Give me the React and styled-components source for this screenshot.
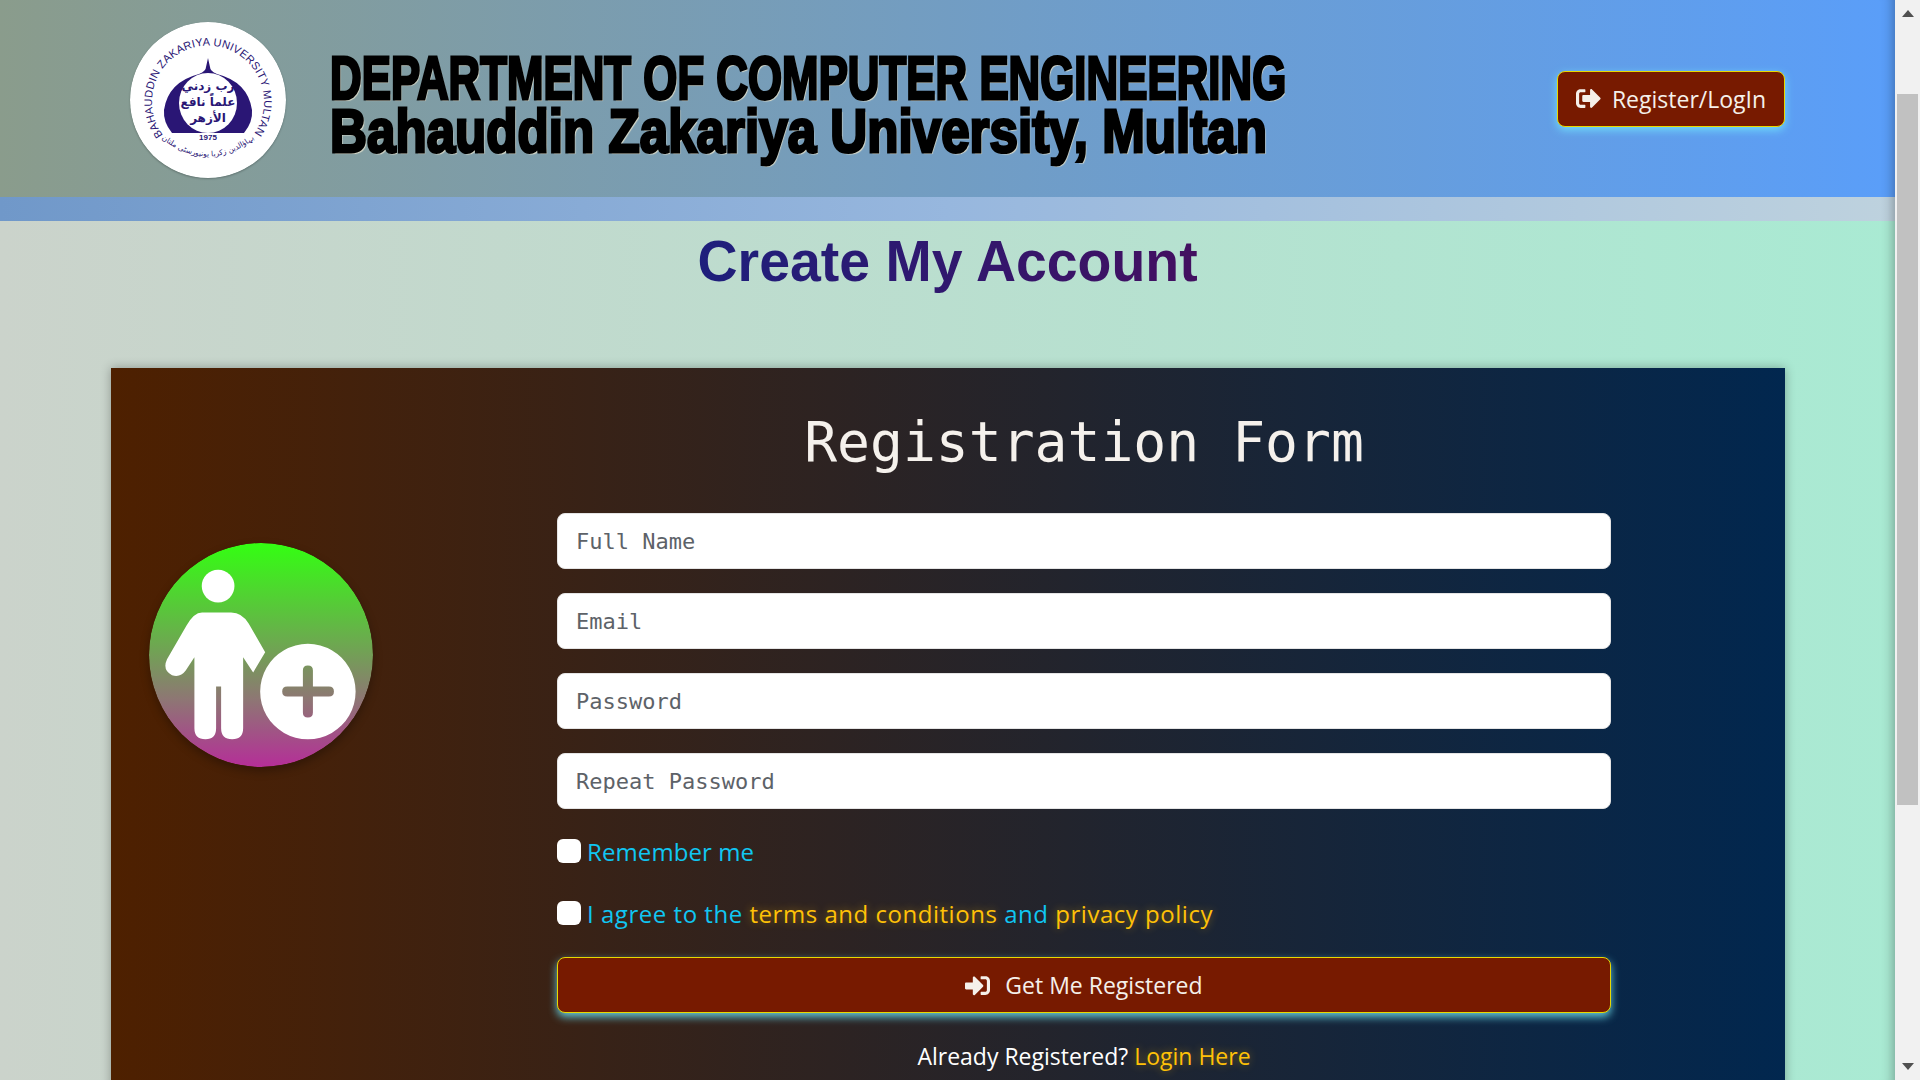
import React from "react";
import styled, { createGlobalStyle } from "styled-components";
import { FaSignOutAlt, FaSignInAlt } from "react-icons/fa";

const GlobalStyle = createGlobalStyle`
  html, body {
    margin: 0;
    padding: 0;
    height: 100%;
    overflow: hidden;
  }
  * {
    box-sizing: border-box;
  }
`;

const Viewport = styled.div`
  display: flex;
  height: 100vh;
  overflow: hidden;
  font-family: "Open Sans", "Noto Sans", sans-serif;
`;

const Page = styled.main`
  position: relative;
  flex: 1;
  min-width: 0;
  overflow: hidden;
  background: linear-gradient(90deg, #cbd3cb 0%, #a9ead3 100%);

  &::after {
    content: "";
    position: absolute;
    inset: 0;
    pointer-events: none;
    box-shadow: inset -14px 0 12px -12px rgba(0, 0, 0, 0.3);
  }
`;

const Header = styled.header`
  display: flex;
  align-items: center;
  height: 197px;
  padding: 0 110px 0 130px;
  background: linear-gradient(90deg, #8a9c8c 0%, #5a9ef9 100%);
`;

const LogoBadge = styled.svg`
  flex: none;
  width: 156px;
  height: 156px;
  margin-top: 2px;
  border-radius: 50%;
  box-shadow: 0 1px 2px rgba(0, 0, 0, 0.25);
`;

const TitleBlock = styled.h1`
  flex: 1;
  min-width: 0;
  margin: 10px 0 0 44px;
  color: #000;
  font-family: "Liberation Sans", sans-serif;
  font-size: 62px;
  font-weight: 700;
  line-height: 53px;
  white-space: nowrap;
  -webkit-text-stroke: 3px #000;
  text-shadow: 2px 2px 1px #d6d8c8;
`;

const TitleLine = styled.div`
  width: max-content;
  transform: scaleX(${(props) => props.$squeeze});
  transform-origin: left center;
`;

const HeaderButton = styled.a`
  display: flex;
  flex: none;
  align-items: center;
  justify-content: center;
  gap: 11px;
  width: 228px;
  height: 56px;
  border: 1px solid #e8d800;
  border-radius: 8px;
  background: #771a00;
  color: #f5f0ea;
  font-size: 23px;
  box-shadow: 0 3px 9px #6fdcfb;
`;

const Band = styled.div`
  height: 24px;
  background: linear-gradient(90deg, #7098c9 0%, #97b7de 50%, #bed2de 100%);
`;

const PageTitle = styled.h2`
  margin: 0;
  padding-top: 7px;
  height: 147px;
  text-align: center;
  font-family: "Liberation Sans", sans-serif;
  font-size: 58px;
  font-weight: 700;
  line-height: 66px;
`;

const PageTitleText = styled.span`
  display: inline-block;
  transform: scaleX(0.956);
  background: linear-gradient(90deg, #1e1f7c, #431060);
  -webkit-background-clip: text;
  background-clip: text;
  color: transparent;
`;

const Card = styled.section`
  display: grid;
  grid-template-columns: 446px 1054px;
  margin: 0 110px 0 111px;
  padding-bottom: 60px;
  background: linear-gradient(90deg, #4e2000 0%, #01274f 100%);
  box-shadow: 0 0 10px rgba(0, 0, 0, 0.3);
`;

const AvatarColumn = styled.div`
  padding: 175px 0 0 38px;
`;

const Avatar = styled.svg`
  display: block;
  width: 224px;
  height: 224px;
  border-radius: 50%;
  box-shadow: 0 4px 10px rgba(0, 0, 0, 0.3);
`;

const Form = styled.form`
  display: flex;
  flex-direction: column;
`;

const FormTitle = styled.h3`
  margin: 0;
  padding-top: 42px;
  height: 145px;
  color: #f5f1ec;
  text-align: center;
  font-family: "DejaVu Sans Mono", "Liberation Mono", monospace;
  font-size: 54.7px;
  font-weight: 400;
  line-height: 64px;
`;

const TextInput = styled.input`
  display: block;
  width: 100%;
  height: 56px;
  margin-bottom: 24px;
  padding: 0 18px;
  border: 1px solid #e4e4e4;
  border-radius: 8px;
  background: #fff;
  font-family: "DejaVu Sans Mono", "Liberation Mono", monospace;
  font-size: 22px;
  outline: none;

  &::placeholder {
    color: #5d6268;
    opacity: 1;
  }
`;

const CheckRow = styled.label`
  display: flex;
  align-items: center;
  gap: 6px;
  height: 24px;
  margin-top: ${(props) => props.$top};
  color: #10c6f2;
  font-size: 24px;
  letter-spacing: ${(props) => props.$spacing};
  white-space: nowrap;
`;

const CheckBox = styled.input`
  appearance: none;
  flex: none;
  width: 24px;
  height: 24px;
  margin: 0;
  border-radius: 6px;
  background: #fff;
`;

const GlowLink = styled.a`
  color: #ffc107;
  text-shadow: 0 0 8px rgba(255, 193, 7, 0.45);
`;

const SubmitButton = styled.button`
  display: flex;
  align-items: center;
  justify-content: center;
  gap: 15px;
  width: 100%;
  height: 56px;
  margin-top: 32px;
  border: 1px solid #e8d800;
  border-radius: 8px;
  background: #771a00;
  color: #f5f0ea;
  font-family: inherit;
  font-size: 23px;
  box-shadow: 0 4px 8px #62c8d8;
`;

const LoginLine = styled.p`
  margin: 27px 0 0;
  color: #fff;
  text-align: center;
  font-size: 23px;
  line-height: 32px;
`;

const ScrollTrack = styled.aside`
  display: flex;
  flex: none;
  flex-direction: column;
  align-items: center;
  width: 25px;
  background: #f1f1f1;
`;

const ScrollArrow = styled.div`
  flex: none;
  width: 0;
  height: 0;
  margin: ${(props) => (props.$down ? "auto 0 10px" : "10px 0 0")};
  border-left: 6px solid transparent;
  border-right: 6px solid transparent;
  border-top: ${(props) => (props.$down ? "7px solid #505050" : "none")};
  border-bottom: ${(props) => (props.$down ? "none" : "7px solid #505050")};
`;

const ScrollThumb = styled.div`
  flex: none;
  width: 21px;
  height: 711px;
  margin-top: 77px;
  background: #c1c1c1;
`;

function UniversityLogo() {
  return (
    <LogoBadge viewBox="0 0 156 156">
      <defs>
        <path id="logo-top-arc" d="M33 113 A56 56 0 1 1 123 113" />
        <path id="logo-bottom-arc" d="M32 117 Q78 152 124 117" />
      </defs>
      <circle cx="78" cy="78" r="78" fill="#fff" />
      <text fill="#2a1675" fontFamily="Liberation Sans" fontSize="11">
        <textPath href="#logo-top-arc" textLength="245" lengthAdjust="spacing">
          BAHAUDDIN ZAKARIYA UNIVERSITY MULTAN
        </textPath>
      </text>
      <path
        d="M78 36 L80 45 Q80 49 87 52 Q118 60 122 88 Q123 100 114 111 H42 Q33 100 34 88 Q38 60 69 52 Q76 49 76 45 Z"
        fill="#2a1675"
      />
      <ellipse cx="78" cy="81" rx="29" ry="30" fill="#fff" />
      <text fill="#2a1675" fontFamily="DejaVu Sans" fontSize="12" fontWeight="700" textAnchor="middle">
        <tspan x="78" y="68">رب زدني</tspan>
        <tspan x="78" y="84">علماً نافع</tspan>
        <tspan x="78" y="100">الأزهر</tspan>
      </text>
      <text x="78" y="118" fill="#2a1675" fontFamily="Liberation Sans" fontSize="8" fontWeight="700" textAnchor="middle">
        1975
      </text>
      <text fill="#2a1675" fontFamily="DejaVu Sans" fontSize="7.5" textAnchor="middle">
        <textPath href="#logo-bottom-arc" startOffset="50%">
          بہاؤالدین زکریا یونیورسٹی ملتان
        </textPath>
      </text>
    </LogoBadge>
  );
}

function AddUserBadge() {
  return (
    <Avatar viewBox="146 130 671 671">
      <defs>
        <linearGradient id="avatar-fill" x1="0" y1="0" x2="0" y2="1">
          <stop offset="0" stopColor="#33ff12" />
          <stop offset="0.45" stopColor="#6da850" />
          <stop offset="0.7" stopColor="#8e7674" />
          <stop offset="1" stopColor="#b52e98" />
        </linearGradient>
      </defs>
      <circle cx="481.5" cy="465.5" r="335.5" fill="url(#avatar-fill)" />
      <circle cx="353" cy="259" r="49" fill="#fff" />
      <path
        fill="#fff"
        d="M305 338 H392 Q425 338 445 372 L494 457 L458 518 L428 472 V685 Q428 718 395 718 Q362 718 362 685 V560 H347 V685 Q347 718 315 718 Q282 718 282 685 V472 L256 512 Q240 534 215 526 Q185 510 200 478 L258 378 Q280 338 305 338 Z"
      />
      <path
        fill="#fff"
        fillRule="evenodd"
        d="M622 432 A143 143 0 1 1 621.9 432 Z M607 512 V560 H560 Q545 560 545 575 Q545 590 560 590 H607 V638 Q607 653 622 653 Q637 653 637 638 V590 H685 Q700 590 700 575 Q700 560 685 560 H637 V512 Q637 497 622 497 Q607 497 607 512 Z"
      />
    </Avatar>
  );
}

export default function App() {
  return (
    <Viewport>
      <GlobalStyle />
      <Page>
        <Header>
          <UniversityLogo />
          <TitleBlock>
            <TitleLine $squeeze={0.707}>DEPARTMENT OF COMPUTER ENGINEERING</TitleLine>
            <TitleLine $squeeze={0.825}>Bahauddin Zakariya University, Multan</TitleLine>
          </TitleBlock>
          <HeaderButton>
            <FaSignOutAlt size={25} />
            Register/LogIn
          </HeaderButton>
        </Header>
        <Band />
        <PageTitle>
          <PageTitleText>Create My Account</PageTitleText>
        </PageTitle>
        <Card>
          <AvatarColumn>
            <AddUserBadge />
          </AvatarColumn>
          <Form>
            <FormTitle>Registration Form</FormTitle>
            <TextInput type="text" placeholder="Full Name" />
            <TextInput type="email" placeholder="Email" />
            <TextInput type="password" placeholder="Password" />
            <TextInput type="password" placeholder="Repeat Password" />
            <CheckRow $top="6px" $spacing="0.1px">
              <CheckBox type="checkbox" />
              Remember me
            </CheckRow>
            <CheckRow $top="38px" $spacing="0.53px">
              <CheckBox type="checkbox" />
              <span>
                I agree to the <GlowLink>terms and conditions</GlowLink> and{" "}
                <GlowLink>privacy policy</GlowLink>
              </span>
            </CheckRow>
            <SubmitButton type="button">
              <FaSignInAlt size={25} />
              Get Me Registered
            </SubmitButton>
            <LoginLine>
              Already Registered? <GlowLink>Login Here</GlowLink>
            </LoginLine>
          </Form>
        </Card>
      </Page>
      <ScrollTrack>
        <ScrollArrow />
        <ScrollThumb />
        <ScrollArrow $down />
      </ScrollTrack>
    </Viewport>
  );
}
